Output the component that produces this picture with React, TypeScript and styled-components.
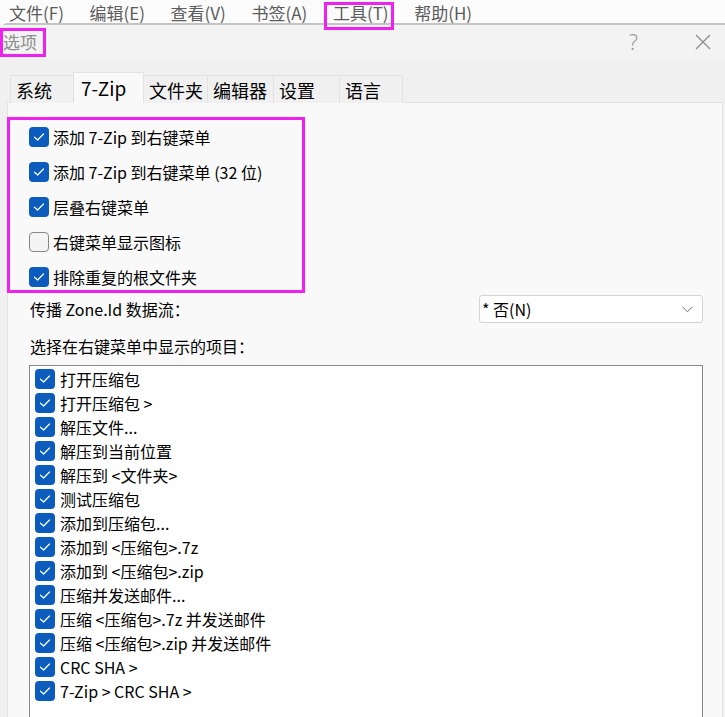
import styled, { createGlobalStyle, css } from 'styled-components';

const GlobalStyle = createGlobalStyle`
  html, body {
    margin: 0;
    padding: 0;
    height: 717px;
    overflow: hidden;
    background: #fbfbfb;
    font-family: "Noto Sans CJK SC", "Noto Sans", sans-serif;
    color: #000;
  }
  * { box-sizing: border-box; }
`;

const MAGENTA = '#f020f0';

const marked = css`
  &::after {
    content: '';
    position: absolute;
    border: 3px solid ${MAGENTA};
    pointer-events: none;
  }
`;

const Page = styled.div`
  height: 717px;
  display: flex;
  flex-direction: column;
  overflow: hidden;
`;

const MenuBar = styled.div`
  height: 25px;
  display: flex;
  align-items: center;
  gap: 25.6px;
  padding: 2px 0 0 9px;
  font-size: 17px;
  color: #5c5c5c;
  background: #fbfbfb;
`;

const MenuItem = styled.span<{ $marked?: boolean }>`
  position: relative;
  z-index: 2;
  line-height: 21px;
  ${(p) =>
    p.$marked &&
    css`
      ${marked}
      &::after {
        top: 0;
        right: -5px;
        bottom: -7px;
        left: -9px;
      }
    `}
`;

const Dialog = styled.div`
  flex: 1;
  display: flex;
  flex-direction: column;
  border-top: 2px solid #c4c4c4;
  border-top-left-radius: 8px;
  background: #f0f0f0;
`;

const TitleBar = styled.div`
  height: 34px;
  display: flex;
  align-items: center;
  padding: 0 14px 0 3px;
  background: #f3f3f3;
`;

const Title = styled.span`
  position: relative;
  font-size: 17px;
  line-height: 22px;
  color: #8e8e8e;
  ${marked}
  &::after {
    top: -3px;
    left: -3px;
    right: -9px;
    bottom: -4px;
  }
`;

const TitleButtons = styled.div`
  margin-left: auto;
  display: flex;
  align-items: center;
  gap: 57px;
`;

const HelpGlyph = styled.span`
  font-family: "Noto Sans", sans-serif;
  font-size: 21px;
  font-weight: 300;
  color: #9a9a9a;
  line-height: 22px;
`;

const Body = styled.div`
  flex: 1;
  display: flex;
  flex-direction: column;
  padding: 13px 2px 0 7px;
`;

const TabStrip = styled.div`
  display: flex;
  align-items: flex-end;
  padding-left: 3px;
  margin-bottom: -1px;
  position: relative;
  z-index: 1;
`;

const Tab = styled.div<{ $active?: boolean; $width: number }>`
  width: ${(p) => p.$width}px;
  height: ${(p) => (p.$active ? 31 : 28)}px;
  margin-left: -1px;
  padding-left: ${(p) => (p.$active ? 7 : 5)}px;
  display: flex;
  align-items: center;
  font-size: ${(p) => (p.$active ? 19 : 18)}px;
  line-height: 24px;
  color: #000;
  border: 1px solid #e2e2e2;
  border-bottom: none;
  background: ${(p) => (p.$active ? '#f9f9f9' : '#f0f0f0')};
  position: relative;
  z-index: ${(p) => (p.$active ? 2 : 1)};
  &:first-child {
    margin-left: 0;
  }
`;

const Panel = styled.div`
  flex: 1;
  display: flex;
  flex-direction: column;
  background: #f9f9f9;
  border: 1px solid #e2e2e2;
  border-bottom: none;
  padding-top: 14px;
`;

const OptionGroup = styled.div`
  width: 298px;
  margin-left: -1px;
  border: 3px solid ${MAGENTA};
  padding: 7px 0 3px 19px;
  display: flex;
  flex-direction: column;
  gap: 15px;
`;

const CheckRow = styled.label<{ $gap: number }>`
  height: 20px;
  display: flex;
  align-items: center;
  gap: ${(p) => p.$gap}px;
  font-size: 16px;
  line-height: 20px;
  white-space: nowrap;
`;

const Box = styled.span<{ $checked: boolean }>`
  width: 20px;
  height: 20px;
  flex: none;
  border-radius: 4px;
  display: flex;
  align-items: center;
  justify-content: center;
  ${(p) =>
    p.$checked
      ? css`
          background: #0b5cbc;
        `
      : css`
          background: #f4f4f4;
          border: 1px solid #878787;
        `}
`;

const FieldRow = styled.div`
  margin-top: 2px;
  height: 28px;
  display: flex;
  align-items: center;
  justify-content: space-between;
  padding: 0 19px 0 22px;
`;

const FieldLabel = styled.span`
  font-size: 16px;
  line-height: 20px;
`;

const Select = styled.div`
  width: 224px;
  height: 28px;
  display: flex;
  align-items: center;
  justify-content: space-between;
  padding: 0 9px 0 2px;
  background: #fff;
  border: 1px solid #d4d4d4;
  border-radius: 3px;
  font-size: 16px;
  line-height: 20px;
`;

const ListLabel = styled.div`
  margin-top: 13px;
  padding-left: 22px;
  font-size: 16px;
  line-height: 20px;
`;

const ListBox = styled.div`
  margin: 9px 19px 0 21px;
  height: 420px;
  flex: none;
  background: #fff;
  border: 1px solid #868a90;
  padding: 3px 0 0 5px;
  display: flex;
  flex-direction: column;
  gap: 4px;
`;

function Check({ checked }: { checked: boolean }) {
  return (
    <Box $checked={checked}>
      {checked && (
        <svg width="20" height="20" viewBox="0 0 20 20">
          <polyline
            points="5.5,10.2 8.6,13 14.5,7"
            fill="none"
            stroke="#fff"
            strokeWidth="1.2"
            strokeLinecap="round"
            strokeLinejoin="round"
          />
        </svg>
      )}
    </Box>
  );
}

const menus = ['文件(F)', '编辑(E)', '查看(V)', '书签(A)', '工具(T)', '帮助(H)'];

const tabs = [
  { label: '系统', width: 64 },
  { label: '7-Zip', width: 71 },
  { label: '文件夹', width: 65 },
  { label: '编辑器', width: 67 },
  { label: '设置', width: 67 },
  { label: '语言', width: 64 },
];

const options = [
  { label: '添加 7-Zip 到右键菜单', checked: true },
  { label: '添加 7-Zip 到右键菜单 (32 位)', checked: true },
  { label: '层叠右键菜单', checked: true },
  { label: '右键菜单显示图标', checked: false },
  { label: '排除重复的根文件夹', checked: true },
];

const items = [
  '打开压缩包',
  '打开压缩包 >',
  '解压文件...',
  '解压到当前位置',
  '解压到 <文件夹>',
  '测试压缩包',
  '添加到压缩包...',
  '添加到 <压缩包>.7z',
  '添加到 <压缩包>.zip',
  '压缩并发送邮件...',
  '压缩 <压缩包>.7z 并发送邮件',
  '压缩 <压缩包>.zip 并发送邮件',
  'CRC SHA >',
  '7-Zip > CRC SHA >',
];

export default function App() {
  return (
    <Page>
      <GlobalStyle />
      <MenuBar>
        {menus.map((m) => (
          <MenuItem key={m} $marked={m === '工具(T)'}>
            {m}
          </MenuItem>
        ))}
      </MenuBar>
      <Dialog>
        <TitleBar>
          <Title>选项</Title>
          <TitleButtons>
            <HelpGlyph>?</HelpGlyph>
            <svg width="16" height="16" viewBox="0 0 16 16">
              <path d="M1 1 L15 15 M15 1 L1 15" stroke="#8a8a8a" strokeWidth="1.2" fill="none" />
            </svg>
          </TitleButtons>
        </TitleBar>
        <Body>
          <TabStrip>
            {tabs.map((t) => (
              <Tab key={t.label} $width={t.width} $active={t.label === '7-Zip'}>
                {t.label}
              </Tab>
            ))}
          </TabStrip>
          <Panel>
            <OptionGroup>
              {options.map((o) => (
                <CheckRow key={o.label} $gap={4}>
                  <Check checked={o.checked} />
                  {o.label}
                </CheckRow>
              ))}
            </OptionGroup>
            <FieldRow>
              <FieldLabel>传播 Zone.Id 数据流：</FieldLabel>
              <Select>
                <span>* 否(N)</span>
                <svg width="11" height="7" viewBox="0 0 11 7">
                  <polyline points="0.5,0.8 5.5,5.8 10.5,0.8" fill="none" stroke="#6a6a6a" strokeWidth="1" />
                </svg>
              </Select>
            </FieldRow>
            <ListLabel>选择在右键菜单中显示的项目：</ListLabel>
            <ListBox>
              {items.map((it) => (
                <CheckRow key={it} $gap={5}>
                  <Check checked />
                  {it}
                </CheckRow>
              ))}
            </ListBox>
          </Panel>
        </Body>
      </Dialog>
    </Page>
  );
}
